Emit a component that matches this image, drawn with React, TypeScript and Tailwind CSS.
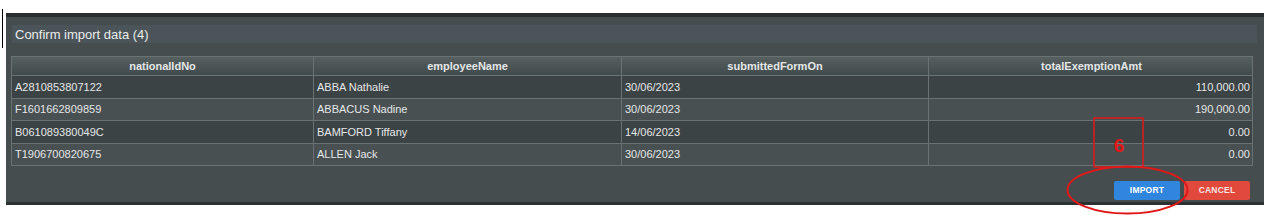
import React from "react";

const rows = [
  { id: "A2810853807122", name: "ABBA Nathalie", date: "30/06/2023", amt: "110,000.00" },
  { id: "F1601662809859", name: "ABBACUS Nadine", date: "30/06/2023", amt: "190,000.00" },
  { id: "B061089380049C", name: "BAMFORD Tiffany", date: "14/06/2023", amt: "0.00" },
  { id: "T1906700820675", name: "ALLEN Jack", date: "30/06/2023", amt: "0.00" },
];

const cols = "grid grid-cols-[302px_308px_307px_325px]";

export default function App() {
  return (
    <div className="relative w-[1273px] h-[217px] bg-white font-['Liberation_Sans',Arial,sans-serif] overflow-hidden">
      {/* stray text cursor line */}
      <div className="absolute left-[2px] top-[9px] w-px h-[39px] bg-black" />

      <div className="ml-[6px] mt-[13px] w-[1258px] h-[192px] bg-[#454d4f] border-t-4 border-t-[#2a2e2f] border-b-[3px] border-b-[#2c3132] flex flex-col">
        <div className="ml-[6px] mr-[7px] mt-[8px] h-[18px] bg-[#4b5458] flex items-center pl-[3px]">
          <span className="text-[13px] text-[#e9ecec] leading-none">Confirm import data (4)</span>
        </div>

        <div className="ml-[5px] mt-[13px] w-[1242px] border border-[#6a7373] text-[11px] text-[#e4e7e7]">
          <div className={`${cols} h-[18px] bg-gradient-to-b from-[#56605f] to-[#414a4c] font-bold`}>
            <div className="flex items-center justify-center border-r border-[#6a7373]">nationalIdNo</div>
            <div className="flex items-center justify-center border-r border-[#6a7373]">employeeName</div>
            <div className="flex items-center justify-center border-r border-[#6a7373]">submittedFormOn</div>
            <div className="flex items-center justify-center">totalExemptionAmt</div>
          </div>
          {rows.map((r, i) => (
            <div
              key={r.id}
              className={`${cols} h-[22.5px] border-t border-[#6a7373] ${i % 2 === 0 ? "bg-[#3c4345]" : "bg-[#485052]"}`}
            >
              <div className="flex items-center pl-[3px] border-r border-[#6a7373]">{r.id}</div>
              <div className="flex items-center pl-[3px] border-r border-[#6a7373]">{r.name}</div>
              <div className="flex items-center pl-[3px] border-r border-[#6a7373]">{r.date}</div>
              <div className="flex items-center justify-end pr-[4px]">{r.amt}</div>
            </div>
          ))}
        </div>

        <div className="flex justify-end gap-[4px] mr-[14px] mt-[15px]">
          <button className="w-[66px] h-[19px] rounded-[2px] bg-[#2f86dc] text-white text-[8.5px] font-bold tracking-wide">
            IMPORT
          </button>
          <button className="w-[66px] h-[19px] rounded-[2px] bg-[#e0493c] text-[#fbe3e0] text-[8.5px] font-bold tracking-wide">
            CANCEL
          </button>
        </div>
      </div>

      {/* red annotation overlay */}
      <svg className="absolute inset-0 pointer-events-none" width="1273" height="217">
        <rect x="1094" y="118" width="49" height="49" fill="none" stroke="#e01818" strokeWidth="1.5" />
        <text x="1119" y="152" textAnchor="middle" fill="#e01818" fontSize="19" fontWeight="bold" fontFamily="Liberation Sans, Arial, sans-serif">6</text>
        <ellipse cx="1127.5" cy="190" rx="60" ry="23.5" fill="none" stroke="#e01818" strokeWidth="2" />
      </svg>
    </div>
  );
}
